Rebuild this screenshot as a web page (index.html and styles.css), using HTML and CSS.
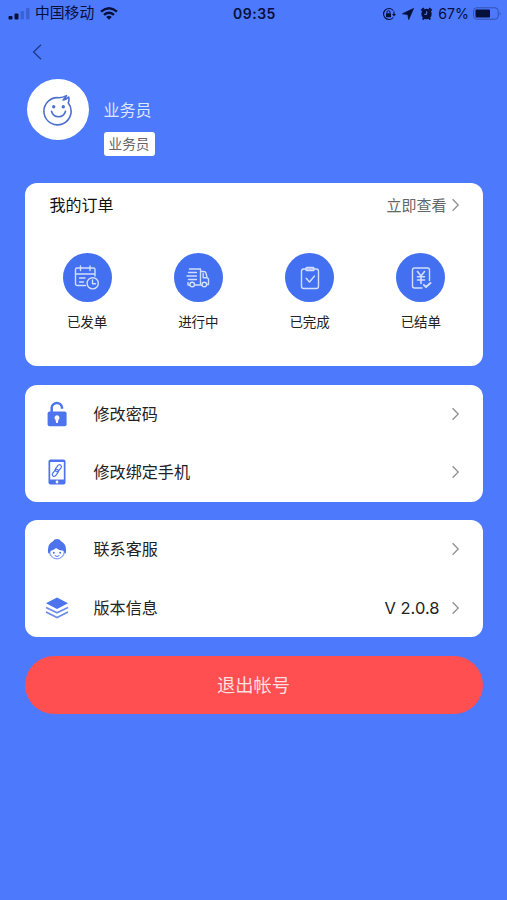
FILE: index.html
```
<!DOCTYPE html>
<html lang="zh-CN">
<head>
<meta charset="utf-8">
<meta name="viewport" content="width=device-width, initial-scale=1">
<title>我的</title>
<link rel="stylesheet" href="styles.css">
</head>
<body>
<header class="status">
  <div class="status-left">
    <svg class="signal" width="23" height="12" viewBox="0 0 23 12"><rect x="0.500" y="8" width="4" height="3.500" rx="1"/><rect x="6.500" y="5.500" width="4" height="6" rx="1"/><g opacity=".22"><rect x="12.500" y="3" width="3.500" height="8.500" rx="1"/><rect x="18" y="0" width="3.500" height="11.500" rx="1"/></g></svg>
    <span class="carrier">中国移动</span>
    <svg class="wifi" width="18" height="13" viewBox="0 0 18 13"><g fill="none" stroke="#07103a" stroke-width="2.400"><path d="M1 4.600Q9-2 17 4.600"/><path d="M4 7.900Q9 3.700 14 7.900"/></g><path d="M6.200 9.900Q9 7.700 11.800 9.900L9 12.800Z"/></svg>
  </div>
  <span class="time">09:35</span>
  <div class="status-right">
    <svg width="14" height="14" viewBox="0 0 14 14"><path d="M11.300 3.500A5.500 5.500 0 1 0 11.300 10.500M12 4.500V8" fill="none" stroke="#07103a" stroke-width="1.100"/><path d="M10 7H14L12 9.500Z"/><rect x="4" y="6.200" width="5" height="4" rx=".6"/><path d="M5 6.500V5.200a1.500 1.500 0 0 1 3 0V6.500" fill="none" stroke="#07103a"/></svg>
    <svg class="locate" width="12" height="12" viewBox="0 0 12 12"><path d="M.5 5.800L11.500.5 6.700 11.500 5.800 6.500Z" stroke="#07103a" stroke-width=".8" stroke-linejoin="round"/></svg>
    <svg class="alarm" width="13" height="13" viewBox="0 0 13 13"><circle cx="6.500" cy="7" r="5.200"/><path d="M1.300 3.500L4 1.300M11.700 3.500L9 1.300M2.700 12.500L4 11M10.300 12.500L9 11" stroke="#07103a" stroke-width="1.900"/><path d="M6.700 4.200V7.300H4.300" fill="none" stroke="#6482f5"/></svg>
    <span class="percent">67%</span>
    <svg class="battery" width="29" height="13" viewBox="0 0 29 13"><rect x=".6" y=".8" width="24.600" height="11.400" rx="3" fill="none" stroke="#3450ad"/><rect x="2.500" y="2.500" width="14.500" height="8" rx="1"/><path d="M26.700 4.500Q28.500 6.500 26.700 8.500Z" fill="#3450ad"/></svg>
  </div>
</header>

<nav class="nav">
  <svg width="10" height="16" viewBox="0 0 10 16"><path d="M9 .8L1.600 8 9 15.200"/></svg>
</nav>

<section class="profile">
  <div class="avatar">
    <svg width="31" height="32" viewBox="0 0 31 32"><path d="M25.200 8.800A13.600 13.600 0 1 1 16 3.700Q20 3.600 23.500 1.600Q22.500 4 20 6Q23.500 5.600 25.700 3Q26.500 6.500 25.200 8.800"/><path d="M8.500 17.300Q10 22.800 15.500 22.800T22.500 17.300" stroke-width="2"/><circle class="eye" cx="10.700" cy="12.700" r="1.700"/><circle class="eye" cx="20.300" cy="12.700" r="1.700"/></svg>
  </div>
  <div class="identity">
    <div class="name">业务员</div>
    <div class="tag">业务员</div>
  </div>
</section>

<main>
  <section class="card orders">
    <div class="orders-head">
      <h2>我的订单</h2>
      <span class="more">立即查看</span>
      <svg class="chevron" width="8" height="14" viewBox="0 0 8 14"><path d="M.6 1.200l5.600 5.800-5.600 5.800"/></svg>
    </div>
    <div class="order-grid">
      <div class="order">
        <span class="disc"><svg width="26" height="26" viewBox="0 0 26 26"><path d="M11.500 20.500H3.500Q1.500 20.500 1.500 18.500V4.500Q1.500 3 3 3H19.500Q21 3 21 4.500V11M1.500 9H21M6.500 1V5.500M16 1V5.500M5.500 13H11M5.500 17H9.500"/><circle cx="18.700" cy="18.300" r="5.600"/><path d="M18.500 15V18.800H21.500"/></svg></span>
        <span>已发单</span>
      </div>
      <div class="order">
        <span class="disc"><svg width="26" height="26" viewBox="0 0 26 26"><path d="M4.500 4H15.500V18.500M15.500 6.500H18.500Q20.500 6.500 21 8L22 12.500 23.500 14V19.500H22M18.200 8.500V12.800H22M17 20H10M4.500 20H3V17.500M3.500 7.500H11.500M2 11H11.500M3.500 14.500H11.500"/><circle cx="7.200" cy="19.500" r="2.300"/><circle cx="19.300" cy="19.500" r="2.300"/></svg></span>
        <span>进行中</span>
      </div>
      <div class="order">
        <span class="disc"><svg width="26" height="26" viewBox="0 0 26 26"><rect x="4.500" y="4" width="17" height="19.500" rx="2.200"/><rect x="9" y="2.500" width="8" height="3" rx=".8" fill="#a9bdfa"/><path d="M9.200 13.200L12.500 17 17.500 11"/></svg></span>
        <span>已完成</span>
      </div>
      <div class="order">
        <span class="disc"><svg width="26" height="26" viewBox="0 0 26 26"><path d="M14 23H6.500Q4.500 23 4.500 21V5Q4.500 3 6.500 3H19.500Q21.500 3 21.500 5V15.500"/><path d="M9.500 6.500L13 11 16.500 6.500M13 11V18.500M9.500 11.700H16.500M9.500 15H16.500" stroke-width="1.600"/><path d="M15.800 19.800L18 22 22.500 18" stroke-width="1.900"/></svg></span>
        <span>已结单</span>
      </div>
    </div>
  </section>

  <section class="card">
    <div class="row">
      <svg class="row-icon" width="24" height="28" viewBox="0 0 24 28"><rect x="2.600" y="11.500" width="19" height="14.800" rx="2" class="solid"/><path d="M6.700 12V7.700A5.200 5.200 0 0 1 17 7.500V8.700" fill="none" stroke="#4d73ed" stroke-width="2.500"/><path d="M12 15.200a2.500 2.500 0 0 1 1.500 4.500L12.800 23H11.200L10.500 19.700A2.500 2.500 0 0 1 12 15.200Z" fill="#fff"/></svg>
      <span class="label">修改密码</span>
      <svg class="chevron" width="8" height="14" viewBox="0 0 8 14"><path d="M.6 1.200l5.600 5.800-5.600 5.800"/></svg>
    </div>
    <div class="row">
      <svg class="row-icon" width="24" height="28" viewBox="0 0 24 28"><rect x="3.500" y="1.500" width="17" height="25" rx="2" class="solid"/><rect x="5.200" y="4" width="13.600" height="17.500" fill="#fff"/><circle cx="12" cy="24" r="1.400" fill="#fff"/><g fill="none" stroke="#4d73ed" stroke-width="1.200"><rect x="11.400" y="6.300" width="3.800" height="7.800" rx="1.900" transform="rotate(38 13.300 10.200)"/><rect x="8.500" y="11" width="3.800" height="7.800" rx="1.900" transform="rotate(38 10.400 14.900)"/></g></svg>
      <span class="label">修改绑定手机</span>
      <svg class="chevron" width="8" height="14" viewBox="0 0 8 14"><path d="M.6 1.200l5.600 5.800-5.600 5.800"/></svg>
    </div>
  </section>

  <section class="card">
    <div class="row">
      <svg class="row-icon" width="24" height="28" viewBox="0 0 24 28"><circle cx="12" cy="16.500" r="7.300" fill="#fff" stroke="#8ba4f0" stroke-width="1.200"/><path class="solid" d="M4.200 18.800Q2.700 18 2.900 15.500Q3 8.500 8 6.300Q9 4 12 4T16 6.300Q21 8.500 21.100 15.500Q21.300 18 19.800 18.800L18.500 15.800Q14 15.500 11 13Q9 15 5.800 15.800Z"/><circle class="solid" cx="8.800" cy="17.800" r="1"/><circle class="solid" cx="15.200" cy="17.800" r="1"/><path d="M9.700 20.500Q12 22.500 14.300 20.500" fill="none" stroke="#4d73ed"/></svg>
      <span class="label">联系客服</span>
      <svg class="chevron" width="8" height="14" viewBox="0 0 8 14"><path d="M.6 1.200l5.600 5.800-5.600 5.800"/></svg>
    </div>
    <div class="row">
      <svg class="row-icon" width="24" height="28" viewBox="0 0 24 28"><path class="solid" d="M12 3.500L23 9.200 12 15 1 9.200Z"/><path d="M1 13.400L12 18.800 23 13.400M1 18L12 23.500 23 18" fill="none" stroke="#6d8bed" stroke-width="1.700"/></svg>
      <span class="label">版本信息</span>
      <span class="version">V 2.0.8</span>
      <svg class="chevron" width="8" height="14" viewBox="0 0 8 14"><path d="M.6 1.200l5.600 5.800-5.600 5.800"/></svg>
    </div>
  </section>

  <button class="logout" type="button">退出帐号</button>
</main>
</body>
</html>
```

FILE: styles.css
```
* {
  box-sizing: border-box;
}

body {
  margin: 0;
  min-height: 900px;
  background: #4d79fc;
  color: #222;
  font-family: Inter, "Noto Sans CJK SC", sans-serif;
}

svg {
  display: block;
  flex: none;
}

.status {
  display: grid;
  grid-template-columns: 1fr auto 1fr;
  align-items: center;
  height: 27px;
  padding: 0 5px 0 8px;
  color: #07103a;
  fill: #07103a;
  font-size: 14.500px;
  line-height: 27px;
}

.status-left,
.status-right {
  display: flex;
  align-items: center;
}

.status-right {
  justify-content: flex-end;
}

.signal {
  margin-right: 4px;
}

.carrier {
  font-size: 14.800px;
}

.wifi {
  margin-left: 6px;
}

.time {
  margin-right: 1px;
  font-size: 14px;
  font-weight: 600;
  letter-spacing: 0.500px;
}

.locate {
  margin-left: 6px;
}

.alarm {
  margin: 0 5px 0 6px;
}

.percent {
  font-size: 14.200px;
}

.battery {
  margin-left: 4px;
}

.nav {
  display: flex;
  align-items: center;
  height: 50px;
  padding-left: 32px;
}

.nav path {
  fill: none;
  stroke: #1d3b83;
  stroke-width: 1.300;
}

.profile {
  display: flex;
  height: 105.500px;
  padding: 2px 27px 0;
}

.avatar {
  display: flex;
  align-items: center;
  justify-content: center;
  width: 62px;
  height: 61px;
  border-radius: 50%;
  background: #fff;
}

.avatar path {
  fill: none;
  stroke: #4d70cf;
  stroke-width: 1.600;
  stroke-linejoin: round;
  stroke-linecap: round;
}

.avatar .eye {
  fill: #4d70cf;
}

.identity {
  display: flex;
  flex-direction: column;
  align-items: flex-start;
  gap: 10px;
  padding: 19px 0 0 14.500px;
}

.name {
  color: #dfe7ff;
  font-size: 16px;
  line-height: 24px;
}

.tag {
  width: 51px;
  height: 24px;
  border-radius: 3px;
  background: #fff;
  color: #666;
  font-size: 13.700px;
  line-height: 24px;
  text-align: center;
}

main {
  display: flex;
  flex-direction: column;
  gap: 18.500px;
  padding: 0 24.500px;
}

.card {
  border-radius: 12px;
  background: #fff;
}

.orders {
  height: 183.500px;
}

.orders-head {
  display: flex;
  align-items: center;
  height: 44px;
  padding: 0 23px 0 25px;
}

h2 {
  flex: 1;
  margin: 0;
  padding-bottom: 2px;
  font-size: 16px;
  font-weight: 400;
  color: #111;
}

.more {
  margin-right: 5px;
  padding-bottom: 1px;
  color: #666;
  font-size: 15px;
}

.chevron {
  fill: none;
  stroke: #909090;
  stroke-width: 1.300;
}

.order-grid {
  display: grid;
  grid-template-columns: repeat(4, 1fr);
  padding: 26.500px 6px 0 7px;
}

.order {
  display: flex;
  flex-direction: column;
  align-items: center;
  gap: 9.500px;
  font-size: 13.500px;
  line-height: 20px;
}

.disc {
  display: flex;
  align-items: center;
  justify-content: center;
  width: 49px;
  height: 49px;
  border-radius: 50%;
  background: #4370f0;
}

.disc svg {
  fill: none;
  stroke: #d3defe;
  stroke-width: 1.400;
  stroke-linejoin: round;
  stroke-linecap: round;
}

.row {
  display: flex;
  align-items: center;
  height: 58.600px;
  padding: 0 23px 0 20px;
}

.label {
  flex: 1;
  margin-left: 25px;
  padding-bottom: 2px;
  font-size: 16.100px;
}

.solid {
  fill: #4d73ed;
}

.version {
  margin-right: 12px;
  font-size: 16.500px;
}

.logout {
  height: 58.500px;
  padding: 0 0 2px;
  border: 0;
  border-radius: 30px;
  background: #ff4f50;
  color: #ffdfe0;
  font: inherit;
  font-size: 18.300px;
}
```
